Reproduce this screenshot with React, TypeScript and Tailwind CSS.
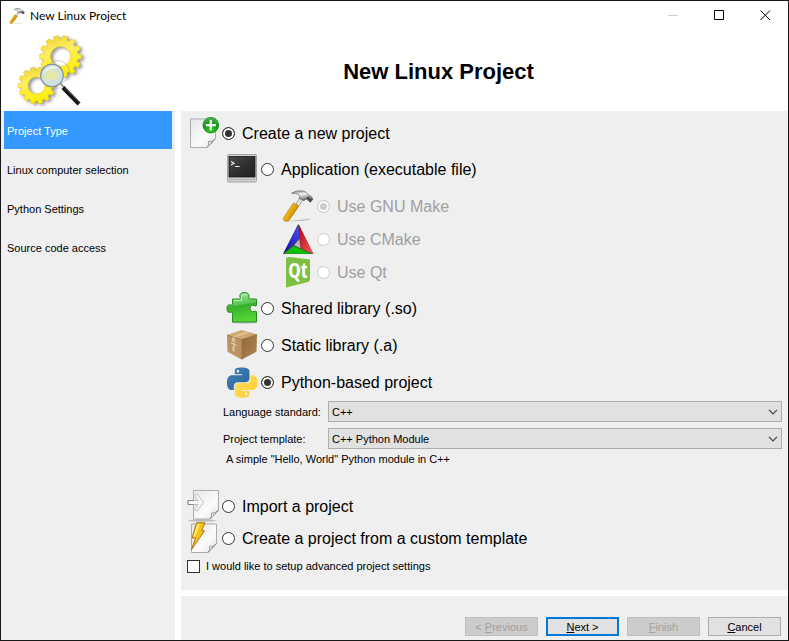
import { useState, type ReactNode } from 'react';

const steps = ['Project Type', 'Linux computer selection', 'Python Settings', 'Source code access'];

function gearPath(cx: number, cy: number, outer: number, inner: number, hole: number, teeth: number) {
  const pt = (r: number, a: number) => `${(cx + r * Math.cos(a)).toFixed(2)} ${(cy + r * Math.sin(a)).toFixed(2)}`;
  const step = (Math.PI * 2) / teeth;
  const points: string[] = [];
  for (let i = 0; i < teeth; i++) {
    const a = i * step;
    points.push(pt(inner, a - step * 0.34), pt(outer, a - step * 0.24), pt(outer, a + step * 0.24), pt(inner, a + step * 0.34));
  }
  return `M${points.join('L')}Z M${cx + hole} ${cy}A${hole} ${hole} 0 1 0 ${cx - hole} ${cy}A${hole} ${hole} 0 1 0 ${cx + hole} ${cy}Z`;
}

function GearsLogo() {
  return (
    <svg viewBox="0 0 76 76" className="size-19" aria-hidden="true">
      <defs>
        <linearGradient id="gear" x1="0.2" y1="0" x2="0.5" y2="1">
          <stop offset="0" stopColor="#f0d22a" />
          <stop offset="0.4" stopColor="#fdee62" />
          <stop offset="1" stopColor="#fdee00" />
        </linearGradient>
        <radialGradient id="lens">
          <stop offset="0" stopColor="#e6ecc4" stopOpacity="0.92" />
          <stop offset="0.5" stopColor="#d3e5de" stopOpacity="0.94" />
          <stop offset="1" stopColor="#c3dcec" stopOpacity="0.95" />
        </radialGradient>
        <filter id="gearShadow" x="-20%" y="-20%" width="150%" height="150%" colorInterpolationFilters="sRGB">
          <feDropShadow dx="2.5" dy="1.5" stdDeviation="1.6" floodColor="#555" floodOpacity="0.6" />
        </filter>
      </defs>
      <g filter="url(#gearShadow)">
        <path d={gearPath(45.5, 23.5, 21, 17.5, 10, 14)} fill="url(#gear)" stroke="#d9bd00" strokeWidth="0.4" fillRule="evenodd" />
        <path d={gearPath(21.5, 52.5, 18.5, 15.5, 8.5, 14)} fill="url(#gear)" stroke="#d9bd00" strokeWidth="0.4" fillRule="evenodd" />
      </g>
      <circle cx="43" cy="39" r="11.5" fill="none" stroke="#999" strokeOpacity="0.5" />
      <path d="M45.5 50.500l4.500 5" stroke="#a0a0a0" strokeWidth="2" />
      <path d="M48 54.500l16 16.500" stroke="#161616" strokeWidth="4.200" />
      <path d="M50 54.500l15 15" stroke="#8a8a8a" strokeWidth="0.8" />
      <circle cx="37" cy="42.500" r="11.300" fill="url(#lens)" stroke="#7e8a8f" strokeWidth="1.100" />
      <path d="M31 40l4-3 3 3 4-2 1 5-3 5-4-3-5 3-3-3z" fill="#ece68e" opacity="0.6" />
      <path d="M28.500 41q2-7 9-8q5 0 6 3q-8-2-15 5z" fill="#fff" opacity="0.6" />
    </svg>
  );
}

function HammerIcon({ className = 'size-8' }: { className?: string }) {
  return (
    <svg viewBox="0 0 32 32" className={className} aria-hidden="true">
      <defs>
        <linearGradient id="hammerHead" x1="0" y1="0" x2="0.3" y2="1">
          <stop offset="0" stopColor="#777" />
          <stop offset="0.4" stopColor="#f3f3f3" />
          <stop offset="1" stopColor="#4e4e4e" />
        </linearGradient>
        <linearGradient id="hammerHandle" x1="0" y1="0" x2="1" y2="0.7">
          <stop offset="0" stopColor="#f7d45e" />
          <stop offset="0.5" stopColor="#edae0c" />
          <stop offset="1" stopColor="#a76b00" />
        </linearGradient>
      </defs>
      <path d="M3 31.500L30 28.500q-4 2-13 2.500z" fill="#777" opacity="0.45" />
      <path d="M14 13.500L19 6l3 1.500L17 16z" fill="#e2e2e2" stroke="#7b7b7b" strokeWidth="0.6" />
      <path d="M11.500 12.800L16.800 16.300 7 30.500q-2.500 2-5.300-.3Q.8 28.700 2 27z" fill="url(#hammerHandle)" stroke="#99700f" strokeWidth="0.5" />
      <path d="M9.500 3.200Q14 .2 20 .8q4.500.6 6.500 4.200l2.500 1.200 2 3-2.800 3.200-1.800-1.800-2.200-1.600-2.200 1.700-4.800-2.300Q18 6 16.500 4.500 14 3 9.500 3.200z" fill="url(#hammerHead)" stroke="#555" strokeWidth="0.6" />
      <path d="M26 6.200l4.300 3.600-2 2.300-2-2.200-2-1.400z" fill="#4d4d4d" />
    </svg>
  );
}

function PageBase({ x = 3.5 }: { x?: number }) {
  return (
    <g transform={`translate(${x} 0)`}>
      <path d="M0 2h25v19.500l-8.500 9H0z" fill="url(#paper)" stroke="#adadad" />
      <path d="M16.500 30.500q2.500-2.500 1.500-6 3.500 1 7-3z" fill="#f9f9f9" stroke="#8d8d8d" strokeWidth="0.9" />
      <path d="M19 28q1.500-1 1-2.500 2 .2 3.200-.8z" fill="#999" />
      <defs>
        <linearGradient id="paper" x1="0" y1="0" x2="1" y2="1">
          <stop offset="0" stopColor="#e6e6e6" />
          <stop offset="0.6" stopColor="#fbfbfb" />
          <stop offset="1" stopColor="#e4e4e4" />
        </linearGradient>
      </defs>
    </g>
  );
}

function NewPageIcon() {
  return (
    <svg viewBox="0 0 32 32" className="size-8" aria-hidden="true">
      <defs>
        <radialGradient id="plus" cx="0.5" cy="0.85" r="0.85">
          <stop offset="0" stopColor="#2fd01f" />
          <stop offset="0.6" stopColor="#159b14" />
          <stop offset="1" stopColor="#5bb85b" />
        </radialGradient>
      </defs>
      <PageBase />
      <circle cx="23.800" cy="8.200" r="7.800" fill="url(#plus)" stroke="#087c10" strokeWidth="0.8" />
      <path d="M23.800 3.200v10M18.800 8.200h10" stroke="#fff" strokeWidth="2.300" />
    </svg>
  );
}

function ImportPageIcon() {
  return (
    <svg viewBox="0 0 32 32" className="size-8" aria-hidden="true">
      <ellipse cx="15" cy="30.500" rx="14" ry="1.200" fill="#bbb" />
      <g transform="translate(3 -1.500)"><PageBase /></g>
      <path d="M1 10.500h10l-3.500-5L10 4l6.500 8.500L10 21l-2.500-1.500 3.500-5H1z" fill="#f8f8f8" stroke="#bcbcbc" />
      <path d="M6.500 10.500H1v4h5.500" fill="none" stroke="#858585" />
    </svg>
  );
}

function TemplatePageIcon() {
  return (
    <svg viewBox="0 0 32 32" className="size-8" aria-hidden="true">
      <PageBase x={4.5} />
      <path d="M9.500.8h8.500l-3.500 8h3L4.500 27.500l4-11.500H5z" fill="#f7c415" stroke="#a5660b" strokeWidth="0.9" />
      <path d="M10.500 2h3L8 14.500H6z" fill="#ffe66b" />
    </svg>
  );
}

function TerminalIcon() {
  return (
    <svg viewBox="0 0 32 32" className="size-8" aria-hidden="true">
      <defs>
        <linearGradient id="screen" x1="0" y1="0" x2="1" y2="1">
          <stop offset="0" stopColor="#4a4a4a" />
          <stop offset="0.5" stopColor="#303030" />
          <stop offset="1" stopColor="#202020" />
        </linearGradient>
      </defs>
      <rect x="1.500" y="1.500" width="29" height="27.500" rx="1.500" fill="#d4d4d4" stroke="#a2a2a2" />
      <rect x="3" y="3.500" width="26" height="20.500" fill="url(#screen)" stroke="#161616" strokeWidth="0.8" />
      <path d="M3 26.500h26" stroke="#b5b5b5" strokeWidth="1.500" />
      <path d="M5 8.500l3 1.800L5 12M9 13.500h4.500" fill="none" stroke="#f3f3f3" strokeWidth="1.100" />
    </svg>
  );
}

function CMakeIcon() {
  return (
    <svg viewBox="0 0 32 32" className="size-8" aria-hidden="true">
      <defs>
        <linearGradient id="cmRed" x1="0" y1="0" x2="1" y2="1">
          <stop offset="0" stopColor="#b00010" />
          <stop offset="1" stopColor="#ff5d5d" />
        </linearGradient>
        <linearGradient id="cmBlue" x1="0" y1="1" x2="1" y2="0">
          <stop offset="0" stopColor="#0707a8" />
          <stop offset="1" stopColor="#5152ea" />
        </linearGradient>
      </defs>
      <path d="M16.300 1L1 31h30.500z" fill="#444" />
      <path d="M16 1.500l1.500 14.500L1.500 30.500z" fill="url(#cmBlue)" />
      <path d="M16.800 1.500l14.500 29.300-12.500-5.300z" fill="url(#cmRed)" />
      <path d="M2 30.800L11.500 23l18 7.800z" fill="#08c20a" />
      <path d="M17.300 16l1.100 9.200-6.200-3z" fill="#bababa" />
    </svg>
  );
}

function QtIcon() {
  return (
    <svg viewBox="0 0 32 32" className="size-8" aria-hidden="true">
      <path d="M4 3.500Q4 1 7 1.100L28 3.500v19.500Q28 25.500 26 26L4 31.500z" fill="#7bc03f" />
      <text x="16" y="22" textAnchor="middle" fill="#fff" fontSize="21" fontWeight="700" fontFamily="'Liberation Sans Narrow', 'Open Sans Condensed', 'DejaVu Sans Condensed', sans-serif">Qt</text>
    </svg>
  );
}

function PuzzleIcon() {
  return (
    <svg viewBox="0 0 32 32" className="size-8" aria-hidden="true">
      <defs>
        <linearGradient id="puzzle" x1="0" y1="0" x2="0.15" y2="1">
          <stop offset="0" stopColor="#a5e6a0" />
          <stop offset="0.45" stopColor="#5bc653" />
          <stop offset="0.5" stopColor="#38b02b" />
          <stop offset="1" stopColor="#55d437" />
        </linearGradient>
      </defs>
      <ellipse cx="18" cy="30.500" rx="13" ry="1.200" fill="#999" opacity="0.5" />
      <path d="M6.500 7h7q1.500-.4.500-2Q13 1 18 .5q5.500 0 5 4-.8 2 .5 2.500h7v6.200q-.4 1.500-2 .5-4-1.500-4.500 2.800.5 4.200 4 3 2-1.200 2.500.5v10h-24V21q-.4-1.500-2-.7Q1 21 1 16.500T4.500 13q1.700.6 2-1z" fill="url(#puzzle)" stroke="#248b25" />
      <path d="M8 8.500h7.500V3.500Q18 1.500 21 3" fill="none" stroke="#dcf8d7" strokeWidth="0.9" opacity="0.8" />
    </svg>
  );
}

function BoxIcon() {
  return (
    <svg viewBox="0 0 32 32" className="size-8" aria-hidden="true">
      <defs>
        <linearGradient id="boxRight" x1="0" y1="0" x2="1" y2="1">
          <stop offset="0" stopColor="#8f6938" />
          <stop offset="1" stopColor="#b08550" />
        </linearGradient>
      </defs>
      <path d="M1 6L15.700 1 31 5.300 15.700 10.500z" fill="#cfa974" />
      <path d="M1 6l14.700 4.500v20L1.500 22.700z" fill="#bb9260" />
      <path d="M31 5.300L15.700 10.500v20l14.800-7.800z" fill="url(#boxRight)" />
      <path d="M6 7.600l15-5.200 3 1L9 8.500z" fill="#ddc193" />
      <path d="M6 7.600l3 .9v5l-3-1z" fill="#d6c39d" />
      <path d="M1 6l14.700 4.500L31 5.300M15.700 10.500v20" fill="none" stroke="#8d673a" strokeWidth="0.6" />
      <path d="M5 14l6 2.500M8 14v9M7 17v5" stroke="#e3d5b7" strokeWidth="1" />
    </svg>
  );
}

function PythonIcon() {
  const snake =
    'M14.25.18l.9.2.73.26.59.3.45.32.34.34.25.34.16.33.1.3.04.26.02.2-.01.13V8.5l-.05.63-.13.55-.21.46-.26.38-.3.31-.33.25-.35.19-.35.14-.33.1-.3.07-.26.04-.21.02H8.77l-.69.05-.59.14-.5.22-.41.27-.33.32-.27.35-.2.36-.15.37-.1.35-.07.32-.04.27-.02.21v3.06H3.17l-.21-.03-.28-.07-.32-.12-.35-.18-.36-.26-.36-.36-.35-.46-.32-.59-.28-.73-.21-.88-.14-1.05-.05-1.23.06-1.22.16-1.04.24-.87.32-.71.36-.57.4-.44.42-.33.42-.24.4-.16.36-.1.32-.05.24-.01h.16l.06.01h8.16v-.83H6.18l-.01-2.75-.02-.37.05-.34.11-.31.17-.28.25-.26.31-.23.38-.2.44-.18.51-.15.58-.12.64-.1.71-.06.77-.04.84-.02 1.27.05zm-6.3 1.98l-.23.33-.08.41.08.41.23.34.33.22.41.09.41-.09.33-.22.23-.34.08-.41-.08-.41-.23-.33-.33-.22-.41-.09-.41.09z';
  return (
    <svg viewBox="0 0 32 32" className="size-8" aria-hidden="true">
      <defs>
        <linearGradient id="pyBlue" x1="0" y1="0" x2="1" y2="1">
          <stop offset="0" stopColor="#4082b8" />
          <stop offset="1" stopColor="#2c6398" />
        </linearGradient>
        <linearGradient id="pyYellow" x1="0" y1="0" x2="1" y2="1">
          <stop offset="0" stopColor="#ffcb2e" />
          <stop offset="1" stopColor="#ffe064" />
        </linearGradient>
      </defs>
      <g transform="translate(1 1.500) scale(1.260)">
        <path d={snake} fill="url(#pyBlue)" />
        <path d={snake} fill="url(#pyYellow)" transform="rotate(180 12 12)" />
      </g>
    </svg>
  );
}

type OptionProps = {
  name: string;
  label: string;
  icon: ReactNode;
  checked: boolean;
  onSelect?: () => void;
  disabled?: boolean;
};

function Option({ name, label, icon, checked, onSelect, disabled }: OptionProps) {
  return (
    <label className="flex h-8 items-center text-base leading-5 has-disabled:text-[#a0a0a0]">
      <span className="shrink-0">{icon}</span>
      <input
        type="radio"
        name={name}
        checked={checked}
        disabled={disabled}
        onChange={() => onSelect?.()}
        className="ml-[3px] size-[13px] shrink-0 appearance-none rounded-full border border-[#333] bg-white checked:bg-[#333] checked:shadow-[inset_0_0_0_2px_white] disabled:border-[#ccc] disabled:checked:bg-[#ccc]"
      />
      <span className="ml-[7px] pt-0.5">{label}</span>
    </label>
  );
}

function Field({ id, label, value }: { id: string; label: string; value: string }) {
  return (
    <div className="flex items-center">
      <label htmlFor={id} className="w-[105px] shrink-0">{label}</label>
      <div className="relative min-w-0 flex-1">
        <select id={id} defaultValue={value} className="block h-[21px] w-full appearance-none border border-[#adadad] bg-[#e1e1e1] px-[3px]">
          <option>{value}</option>
        </select>
        <svg viewBox="0 0 10 6" className="pointer-events-none absolute top-2 right-1 h-1.5 w-2.5" aria-hidden="true">
          <path d="M1 .8l4 4 4-4" fill="none" stroke="#444" strokeWidth="1.200" />
        </svg>
      </div>
    </div>
  );
}

function WizardButton({ children, primary, disabled }: { children: ReactNode; primary?: boolean; disabled?: boolean }) {
  const look = primary ? 'border-2 border-[#0078d7] bg-[#e1e1e1]' : 'border border-[#adadad] bg-[#e1e1e1] disabled:border-[#bfbfbf] disabled:bg-[#ccc] disabled:text-[#a0a0a0]';
  return (
    <button type="button" disabled={disabled} className={`flex h-[19px] w-[73px] items-center justify-center ${look}`}>
      <span>{children}</span>
    </button>
  );
}

export default function App() {
  const [mode, setMode] = useState('new');
  const [kind, setKind] = useState('python');

  return (
    <div className="flex min-h-screen flex-col border border-[#18181b] bg-white font-['Liberation_Sans',Arial,sans-serif] text-[11px] leading-4 text-black">
      <div className="flex h-[29px] items-center pl-2">
        <HammerIcon className="size-4" />
        <span className="ml-[5px] flex-1 font-['Lato','Open_Sans',sans-serif] text-xs">New Linux Project</span>
        <button type="button" aria-label="Minimize" disabled className="flex h-full w-[46px] items-center justify-center">
          <svg viewBox="0 0 11 11" className="size-[11px]"><path d="M0 5.500h10" stroke="#ccc" /></svg>
        </button>
        <button type="button" aria-label="Maximize" className="flex h-full w-[46px] items-center justify-center">
          <svg viewBox="0 0 11 11" className="size-[11px]"><path d="M.5.5h9v9h-9z" fill="none" stroke="#000" /></svg>
        </button>
        <button type="button" aria-label="Close" className="flex h-full w-[46px] items-center justify-center">
          <svg viewBox="0 0 11 11" className="size-[11px]"><path d="M.5.5l9.500 9.500M10 .5L.5 10" stroke="#000" /></svg>
        </button>
      </div>

      <header className="flex h-[81px] items-center pr-0.5 pl-3.5">
        <GearsLogo />
        <h1 className="flex-1 pt-0.5 text-center text-[22px] leading-7 font-bold">New Linux Project</h1>
      </header>

      <div className="flex flex-1 gap-1.5">
        <nav className="w-[174px] shrink-0 bg-[#efefef] px-[3px]">
          <ol className="flex flex-col gap-px">
            {steps.map((step, index) => (
              <li key={step} className={`flex h-[38px] items-center px-[3px] pt-0.5 ${index === 0 ? 'bg-[#3399ff] text-white' : ''}`}>{step}</li>
            ))}
          </ol>
        </nav>

        <div className="flex min-w-0 flex-1 flex-col gap-1.5">
          <main className="flex-1 bg-[#efefef] px-1.5 pt-1.5 pb-4">
            <Option name="mode" label="Create a new project" icon={<NewPageIcon />} checked={mode === 'new'} onSelect={() => setMode('new')} />
            <div className="mt-1 pl-[39px]">
              <Option name="kind" label="Application (executable file)" icon={<TerminalIcon />} checked={kind === 'app'} onSelect={() => setKind('app')} />
              <div className="mt-[5px] mb-1 flex flex-col gap-px pl-14">
                <Option name="build" label="Use GNU Make" icon={<HammerIcon />} checked disabled />
                <Option name="build" label="Use CMake" icon={<CMakeIcon />} checked={false} disabled />
                <Option name="build" label="Use Qt" icon={<QtIcon />} checked={false} disabled />
              </div>
              <div className="flex flex-col gap-[5px]">
                <Option name="kind" label="Shared library (.so)" icon={<PuzzleIcon />} checked={kind === 'shared'} onSelect={() => setKind('shared')} />
                <Option name="kind" label="Static library (.a)" icon={<BoxIcon />} checked={kind === 'static'} onSelect={() => setKind('static')} />
                <Option name="kind" label="Python-based project" icon={<PythonIcon />} checked={kind === 'python'} onSelect={() => setKind('python')} />
              </div>
            </div>
            <div className="mt-[3px] flex flex-col gap-1.5 pl-9">
              <Field id="language" label="Language standard:" value="C++" />
              <Field id="template" label="Project template:" value="C++ Python Module" />
            </div>
            <p className="mt-0.5 pl-[39px]">A simple "Hello, World" Python module in C++</p>
            <div className="mt-[23px]">
              <Option name="mode" label="Import a project" icon={<ImportPageIcon />} checked={mode === 'import'} onSelect={() => setMode('import')} />
              <Option name="mode" label="Create a project from a custom template" icon={<TemplatePageIcon />} checked={mode === 'template'} onSelect={() => setMode('template')} />
            </div>
            <label className="mt-1 flex items-center gap-1.5">
              <input type="checkbox" className="size-[13px] appearance-none border border-[#333] bg-white checked:bg-[#333]" />
              I would like to setup advanced project settings
            </label>
          </main>

          <footer className="flex justify-end gap-2 bg-[#efefef] pt-[21px] pr-[7px] pb-1">
            <WizardButton disabled>&lt; <u>P</u>revious</WizardButton>
            <WizardButton primary><u>N</u>ext &gt;</WizardButton>
            <WizardButton disabled><u>F</u>inish</WizardButton>
            <WizardButton><u>C</u>ancel</WizardButton>
          </footer>
        </div>
      </div>
    </div>
  );
}
